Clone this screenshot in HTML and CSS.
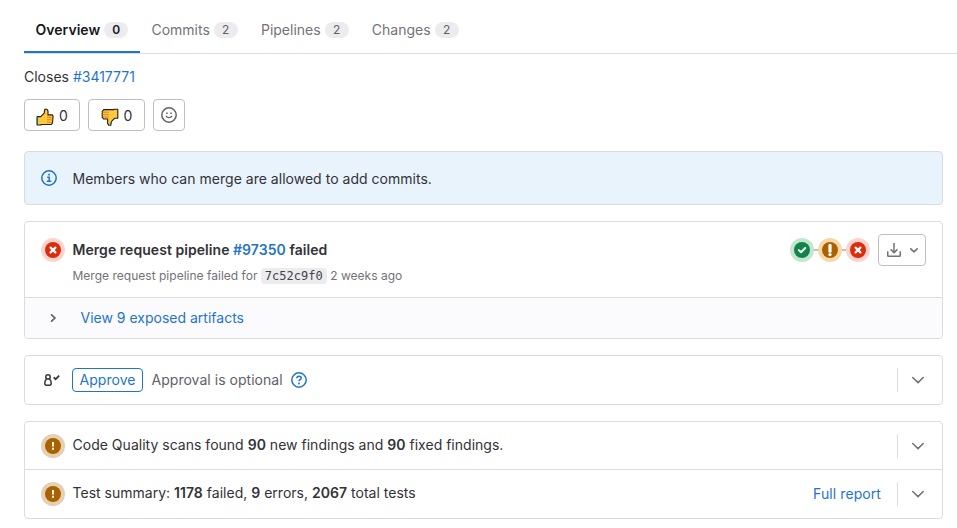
FILE: index.html
```
<!DOCTYPE html>
<html lang="en">
<head>
<meta charset="utf-8">
<title>Merge request</title>
<link rel="stylesheet" href="styles.css">
</head>
<body>
<svg class="defs" width="0" height="0">
  <symbol id="chev-down" viewBox="0 0 16 16"><path d="M2.75 5.5 8 10.6l5.25-5.1" fill="none" stroke="currentColor" stroke-width="1.6" stroke-linecap="round" stroke-linejoin="round"/></symbol>
  <symbol id="failed" viewBox="0 0 24 24"><circle cx="12" cy="12" r="12" fill="#fdd4cd"/><circle cx="12" cy="12" r="8" fill="#dd2b0e"/><path d="m9.6 9.6 4.8 4.8m0-4.8-4.8 4.8" stroke="#fff" stroke-width="2.2" stroke-linecap="round"/></symbol>
  <symbol id="passed" viewBox="0 0 24 24"><circle cx="12" cy="12" r="12" fill="#c3e6cd"/><circle cx="12" cy="12" r="8" fill="#108548"/><path d="m8.8 12.1 2.2 2.2 4.3-4.3" fill="none" stroke="#fff" stroke-width="2" stroke-linecap="round" stroke-linejoin="round"/></symbol>
  <symbol id="warning" viewBox="0 0 24 24"><circle cx="12" cy="12" r="12" fill="#f5d9a8"/><circle cx="12" cy="12" r="8" fill="#ab6100"/><path d="M12 7.4v5.8" stroke="#fff" stroke-width="3.2" stroke-linecap="round"/><circle cx="12" cy="16.6" r="1.7" fill="#fff"/></symbol>
  <symbol id="notice" viewBox="0 0 24 24"><circle cx="12" cy="12" r="12" fill="#e6cfb2"/><circle cx="12" cy="12" r="8" fill="#ab6100"/><path d="M12 8v4.4M12 13.8v2" stroke="#fff" stroke-width="2"/></symbol>
</svg>

<nav class="tabs">
  <a class="tab active">Overview<span class="badge">0</span></a>
  <a class="tab">Commits<span class="badge">2</span></a>
  <a class="tab">Pipelines<span class="badge">2</span></a>
  <a class="tab">Changes<span class="badge">2</span></a>
</nav>

<main class="content">
  <p class="closes">Closes <a class="link">#3417771</a></p>

  <div class="awards">
    <button class="btn award up">
      <svg width="18" height="18" viewBox="0 0 18 18"><path d="M1.2 8.6h3.6l3.4-3.4.6-4h2.1l1.1 1.7v4h4.3l.8 1.2-.6 7-1.2 1.4H5.1v.5H1.2z" fill="#ffc83d" stroke="#241b12" stroke-width="1.1" stroke-linejoin="round"/><path d="M11 9.4h5.5M11 11.8h5.5M11 14.2h5.3" stroke="#d6801f" stroke-width=".9"/><path d="M1.1 9v7.8" stroke="#087d68" stroke-width="1.1"/></svg>
      <span>0</span>
    </button>
    <button class="btn award down">
      <svg width="18" height="18" viewBox="0 0 18 18"><path d="M16.8 1.2h-4v.4H2.7L1.2 3.4v5.9l1.3 1.7h4.1v4.4l1.1 1.9h2l.8-4 3.1-3h3.2z" fill="#ffc83d" stroke="#241b12" stroke-width="1.1" stroke-linejoin="round"/><path d="M1.6 4.2h6.2M1.6 6.6h6.2M1.8 9h6" stroke="#d6801f" stroke-width=".9"/><path d="M9.7 16.8l.8-3.5" stroke="#087d68" stroke-width="1"/></svg>
      <span>0</span>
    </button>
    <button class="btn react">
      <svg width="16" height="16" viewBox="0 0 16 16" fill="none" stroke="#626168"><circle cx="8" cy="8" r="7.2" stroke-width="1.5"/><path d="M5.3 9.3c.7 1.7 4.7 1.7 5.4 0" stroke-width="1.4" stroke-linecap="round"/><path d="M5.2 6.2h1.5m2.6 0h1.5" stroke-width="1.5"/></svg>
    </button>
  </div>

  <section class="alert">
    <svg width="16" height="16" viewBox="0 0 16 16" fill="none" stroke="#1f75cb" stroke-width="1.5"><circle cx="8" cy="8" r="7.2"/><path d="M6.2 7.3h2v4M5.8 11.3h4.5"/><path d="M7.2 4.7h1.7" stroke-width="1.8"/></svg>
    <span>Members who can merge are allowed to add commits.</span>
  </section>

  <section class="card">
    <div class="pipeline">
      <svg class="status" width="24" height="24"><use href="#failed"/></svg>
      <div class="pipeline-text">
        <div class="title">Merge request pipeline <a class="link">#97350</a> failed</div>
        <div class="subtitle">Merge request pipeline failed for <code>7c52c9f0</code> 2 weeks ago</div>
      </div>
      <div class="stages">
        <svg width="24" height="24"><use href="#passed"/></svg><i></i><svg width="24" height="24"><use href="#warning"/></svg><i></i><svg width="24" height="24"><use href="#failed"/></svg>
      </div>
      <button class="btn download">
        <svg width="16" height="16" viewBox="0 0 16 16" fill="none" stroke="currentColor" stroke-width="1.5"><path d="M8 1v9.5M4.6 7.4 8 10.7l3.4-3.3M1.75 9.2v4.3q0 .8.8.8h10.9q.8 0 .8-.8V9.2"/></svg>
        <svg class="caret" width="16" height="16" viewBox="0 0 16 16" fill="none" stroke="currentColor" stroke-width="1.6" stroke-linecap="round"><path d="M4.8 6.8 8 9.8l3.2-3"/></svg>
      </button>
    </div>
    <div class="artifacts">
      <svg width="16" height="16" viewBox="0 0 16 16" fill="none" stroke="#626168" stroke-width="1.7" stroke-linecap="round"><path d="m6.6 4.8 3.3 3.2-3.3 3.2"/></svg>
      <a class="link">View 9 exposed artifacts</a>
    </div>
  </section>

  <section class="card approval">
    <svg class="approver" width="16" height="16" viewBox="0 0 16 16" fill="none" stroke="#333238" stroke-width="1.5"><circle cx="4" cy="4.9" r="2.2"/><path d="M2.6 7.2C1.1 8 .8 9.4.8 11.3q0 2 1.6 2h3.2q1.6 0 1.6-2c0-1.9-.3-3.3-1.8-4.1"/><path d="m9.7 5.4 1.9 1.8 3.6-3.5" stroke-width="1.7"/></svg>
    <button class="approve">Approve</button>
    <span class="optional">Approval is optional</span>
    <svg class="help" width="16" height="16" viewBox="0 0 16 16" fill="none" stroke="#1f75cb" stroke-width="1.5"><circle cx="8" cy="8" r="7.2"/><path d="M5.8 6.2C6 3.5 10.2 3.7 10.2 6.1c0 1.6-2.2 1.6-2.2 3.2"/><circle cx="8" cy="11.5" r=".95" fill="#1f75cb" stroke="none"/></svg>
    <span class="toggle"><svg width="16" height="16"><use href="#chev-down"/></svg></span>
  </section>

  <section class="card reports">
    <div class="report">
      <svg class="status" width="24" height="24"><use href="#notice"/></svg>
      <span class="report-text">Code Quality scans found <b>90</b> new findings and <b>90</b> fixed findings.</span>
      <span class="toggle"><svg width="16" height="16"><use href="#chev-down"/></svg></span>
    </div>
    <div class="report">
      <svg class="status" width="24" height="24"><use href="#notice"/></svg>
      <span class="report-text">Test summary: <b>1178</b> failed, <b>9</b> errors, <b>2067</b> total tests</span>
      <a class="link full">Full report</a>
      <span class="toggle"><svg width="16" height="16"><use href="#chev-down"/></svg></span>
    </div>
  </section>
</main>
</body>
</html>
```
FILE: styles.css
```
* { box-sizing: border-box; }
body {
  margin: 0;
  height: 528px;
  overflow: hidden;
  background: #fff;
  color: #333238;
  font: 14px/20px Inter, "Liberation Sans", sans-serif;
}
.defs { position: absolute; }
svg { display: block; flex: none; }
button { font: inherit; color: inherit; }
b { font-weight: 600; }
.link { color: #1f75cb; }

.tabs {
  display: flex;
  height: 54px;
  margin-left: 24px;
  padding-top: 8px;
  border-bottom: 1px solid #dcdcde;
}
.tab {
  display: flex;
  align-items: center;
  padding: 0 11.7px 2px 11.5px;
  height: 45px;
  color: #737278;
}
.tab.active {
  color: #18171d;
  font-weight: 600;
  letter-spacing: 0.03px;
  box-shadow: inset 0 -2px #1f75cb;
}
.badge {
  min-width: 24px;
  height: 16px;
  margin-left: 4px;
  border-radius: 8px;
  background: #ececef;
  color: #626168;
  font-size: 12px;
  line-height: 16px;
  text-align: center;
}
.active .badge { color: #18171d; }

.content { padding: 13px 14px 0 24px; }
.closes { margin: 0 0 12px; }

.awards { display: flex; gap: 8px; margin-bottom: 20px; }
.btn {
  display: flex;
  align-items: center;
  justify-content: center;
  height: 32px;
  padding: 0;
  border: 1px solid #bfbfc3;
  border-radius: 4px;
  background: #fff;
}
.award { gap: 5px; width: 56px; padding: 1px 0 0; }
.award svg { margin-top: 3px; }
.down { width: 57px; }
.react { width: 32px; }

.alert {
  display: flex;
  align-items: center;
  gap: 15.5px;
  height: 54px;
  padding-left: 16px;
  border: 1px solid #dcdcde;
  border-radius: 4px;
  background: #e9f3fc;
}
.alert span { padding-top: 2px; letter-spacing: 0.02px; }

.card {
  margin-top: 16px;
  border: 1px solid #dcdcde;
  border-radius: 4px;
}
.status { margin-right: 7.5px; }
.pipeline {
  display: flex;
  align-items: flex-start;
  height: 75px;
  padding: 12px 16px;
}
.pipeline .status { margin-top: 4px; }
.pipeline-text { flex: 1; padding-top: 6px; }
.title { font-weight: 600; letter-spacing: 0.05px; }
.subtitle { margin-top: 6px; color: #737278; font-size: 12px; letter-spacing: 0.015px; }
code {
  display: inline-block;
  height: 16px;
  padding: 0 4px;
  border-radius: 4px;
  background: #ececef;
  color: #434248;
  font: 12px/16px "DejaVu Sans Mono", monospace;
}
.stages { display: flex; align-items: center; margin: 4px 8px 0 0; }
.stages i { width: 4px; height: 2px; background: #bfbfc3; }
.download { gap: 4px; width: 48px; padding-left: 4px; color: #737278; }
.artifacts {
  display: flex;
  align-items: center;
  gap: 19.5px;
  height: 41px;
  padding-left: 20px;
  border-top: 1px solid #dcdcde;
  border-radius: 0 0 4px 4px;
  background: #fbfafd;
}

.approval { display: flex; align-items: center; height: 50px; padding: 0 16px 0 19px; }
.approve {
  width: 71px;
  height: 24px;
  margin: 0 8.5px 0 12px;
  padding: 0;
  border: 1px solid #1f75cb;
  border-radius: 4px;
  background: #fff;
  color: #1f75cb;
  line-height: 20px;
  letter-spacing: 0.06px;
}
.optional { color: #626168; letter-spacing: 0.03px; }
.help { margin-left: 8px; }
.toggle {
  display: flex;
  align-items: center;
  width: 29px;
  height: 24px;
  margin-left: auto;
  padding-left: 12px;
  border-left: 1px solid #dcdcde;
  color: #737278;
}

.report { display: flex; align-items: center; height: 47px; padding: 1px 16px 0; }
.report + .report { height: 49px; padding-top: 0; border-top: 1px solid #dcdcde; }
.report-text { padding-bottom: 2px; letter-spacing: 0.015px; }
.full { margin-left: auto; letter-spacing: 0.08px; }
.full + .toggle { margin-left: 16px; }
```
